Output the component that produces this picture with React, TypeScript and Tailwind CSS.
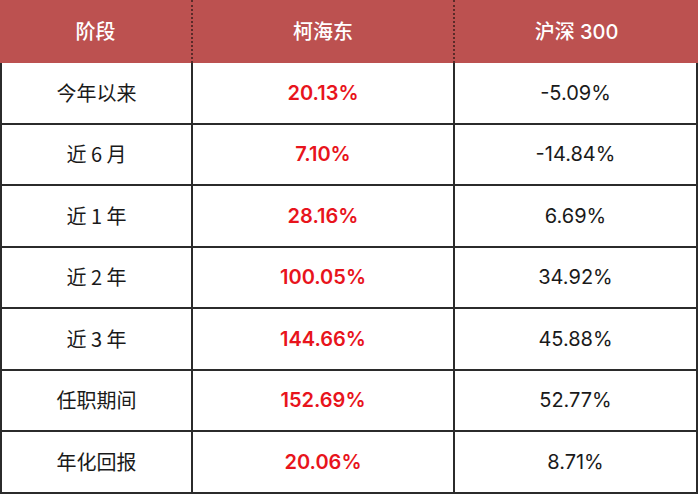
const rows = [
  { label: '今年以来', fund: '20.13%', index: '-5.09%' },
  { label: '近 6 月', fund: '7.10%', index: '-14.84%' },
  { label: '近 1 年', fund: '28.16%', index: '6.69%' },
  { label: '近 2 年', fund: '100.05%', index: '34.92%' },
  { label: '近 3 年', fund: '144.66%', index: '45.88%' },
  { label: '任职期间', fund: '152.69%', index: '52.77%' },
  { label: '年化回报', fund: '20.06%', index: '8.71%' },
];

const font = "font-['Inter','Noto_Sans_CJK_SC',sans-serif]";

export default function App() {
  return (
    <div className={`w-[700px] h-[497px] bg-white ${font}`}>
      <div className="w-[698px]">
        {/* header */}
        <div className="grid grid-cols-[193px_262px_243px] h-[63px] bg-[#bc5150] text-white text-[20px] font-medium">
          <div className="flex items-center justify-center border-r-2 border-dotted border-[#5a2a28]">阶段</div>
          <div className="flex items-center justify-center border-r-2 border-dotted border-[#5a2a28]">柯海东</div>
          <div className="flex items-center justify-center">沪深 300</div>
        </div>
        {rows.map((r) => (
          <div
            key={r.label}
            className="grid grid-cols-[193px_262px_243px] h-[61.5px] border-b-2 border-[#2b2b2b] text-[20px]"
          >
            <div className="flex items-center justify-center border-l-2 border-r-2 border-[#2b2b2b] text-[#1a1a1a] font-['Noto_Sans_CJK_SC',sans-serif]">
              {r.label}
            </div>
            <div className="flex items-center justify-center border-r-2 border-[#2b2b2b] text-[#e8141c] font-semibold">
              {r.fund}
            </div>
            <div className="flex items-center justify-center border-r-2 border-[#2b2b2b] text-[#1a1a1a]">
              {r.index}
            </div>
          </div>
        ))}
      </div>
    </div>
  );
}
